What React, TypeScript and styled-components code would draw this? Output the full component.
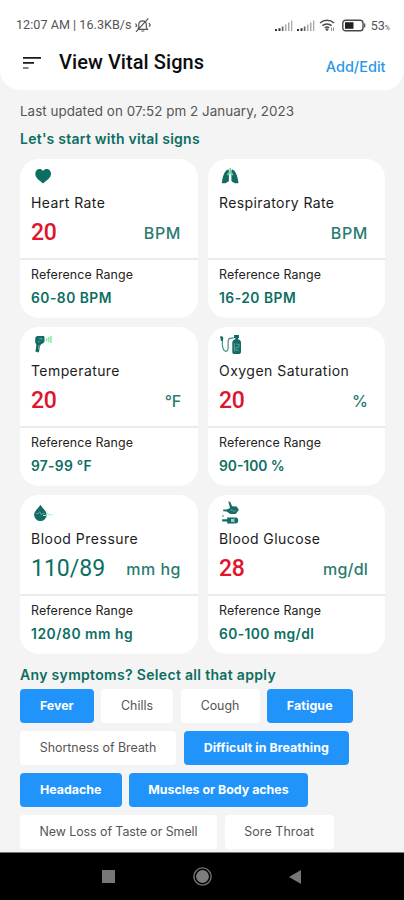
import React from "react";
import styled, { createGlobalStyle } from "styled-components";

const TEAL = "#0c6e62";
const RED = "#e0142d";
const BLUE = "#2094fa";

const GlobalStyle = createGlobalStyle`
  * { box-sizing: border-box; }
  html, body { margin: 0; padding: 0; background: #f4f4f4; }
  body { font-family: Inter, "Liberation Sans", sans-serif; }
  svg { display: block; flex: none; }
`;

const Screen = styled.div`
  width: 404px;
  height: 900px;
  overflow: hidden;
  display: flex;
  flex-direction: column;
  background: #f4f4f4;
`;

const Header = styled.header`
  height: 90px;
  flex: none;
  background: #fff;
  border-radius: 0 0 20px 20px;
`;

const StatusBar = styled.div`
  height: 42px;
  padding: 8px 14px 0 16px;
  display: flex;
  align-items: center;
  font: 400 12.6px/16px Roboto, sans-serif;
  color: #555;
`;

const StatusText = styled.span`
  letter-spacing: 0.03px;
  margin-right: 2px;
  white-space: nowrap;
`;

const StatusIcons = styled.div`
  margin-left: auto;
  display: flex;
  align-items: center;
`;

const Percent = styled.span`
  display: flex;
  align-items: baseline;
  margin: 1px 0 0 5px;
  line-height: 16px;
`;

const PercentSign = styled.span`
  font-size: 7px;
  line-height: 8px;
`;

const TitleBar = styled.div`
  height: 42px;
  padding: 0 18.5px 0 23px;
  display: flex;
  align-items: center;
`;

const Title = styled.h1`
  margin: 0 0 2px 18px;
  font: 500 20px/26px Roboto, sans-serif;
  letter-spacing: 0.07px;
  color: #0c0c0c;
`;

const EditLink = styled.a`
  margin: 8px 0 0 auto;
  font-size: 14.5px;
  line-height: 18px;
  font-weight: 500;
  color: #2b96e8;
`;

const Content = styled.main`
  flex: 1;
  min-height: 0;
  overflow: hidden;
  padding: 12px 19px 0 20px;
`;

const Updated = styled.p`
  margin: 0;
  font-size: 13.4px;
  line-height: 18px;
  color: #555;
  white-space: nowrap;
  letter-spacing: 0.05px;
`;

const SectionTitle = styled.h2<{ $top: number; $ls: number }>`
  margin: ${(p) => p.$top}px 0 0;
  font-size: 14px;
  line-height: 18px;
  font-weight: 600;
  color: ${TEAL};
  letter-spacing: ${(p) => p.$ls}px;
  white-space: nowrap;
`;

const Grid = styled.section`
  margin-top: 10.5px;
  display: grid;
  grid-template-columns: 178px 177px;
  column-gap: 10px;
  row-gap: 8.7px;
`;

const Card = styled.article`
  height: 159.5px;
  border-radius: 19px;
  background: #fff;
`;

const CardTop = styled.div`
  height: 101.5px;
  padding: 6.5px 17px 0 11px;
  border-bottom: 2px solid #ebebeb;
`;

const IconSlot = styled.div`
  height: 24px;
`;

const Name = styled.div<{ $ls: number }>`
  margin-top: 5px;
  font-size: 14px;
  line-height: 18px;
  color: #1c1c1c;
  letter-spacing: ${(p) => p.$ls}px;
  white-space: nowrap;
`;

const Reading = styled.div`
  margin-top: 7px;
  height: 28px;
  display: flex;
  align-items: center;
  justify-content: space-between;
`;

const Value = styled.span<{ $normal?: boolean }>`
  font: ${(p) => (p.$normal ? 400 : 500)} 23px/28px Roboto, sans-serif;
  letter-spacing: ${(p) => (p.$normal ? 0 : -0.2)}px;
  color: ${(p) => (p.$normal ? TEAL : RED)};
`;

const Unit = styled.span<{ $ls: number }>`
  margin: 0 0 1px auto;
  font-size: 16px;
  line-height: 20px;
  font-weight: 500;
  letter-spacing: ${(p) => p.$ls}px;
  color: #2a7b70;
`;

const CardBottom = styled.div`
  padding: 6.5px 11px 0;
`;

const RangeLabel = styled.div`
  font-size: 12.4px;
  line-height: 16px;
  letter-spacing: 0.12px;
  color: #222;
`;

const Range = styled.div<{ $ls: number }>`
  margin-top: 6px;
  font-size: 13.8px;
  line-height: 18px;
  font-weight: 600;
  letter-spacing: ${(p) => p.$ls}px;
  color: ${TEAL};
`;

const Chips = styled.section`
  margin-top: 5px;
  display: flex;
  flex-direction: column;
  gap: 8px;
`;

const ChipRow = styled.div`
  display: flex;
  gap: 7.5px;
`;

const Chip = styled.button<{ $on?: boolean; $w: number; $ls: number }>`
  width: ${(p) => p.$w}px;
  height: 34px;
  flex: none;
  padding: 0;
  border: 0;
  border-radius: 4px;
  background: ${(p) => (p.$on ? BLUE : "#fff")};
  color: ${(p) => (p.$on ? "#fff" : "#555")};
  font: ${(p) => (p.$on ? 700 : 400)} 12.4px/16px Inter, sans-serif;
  letter-spacing: ${(p) => p.$ls}px;
  white-space: nowrap;
`;

const NavBar = styled.nav`
  height: 48px;
  flex: none;
  background: #000;
  border-top: 1px solid #777;
  display: flex;
  align-items: center;
  justify-content: space-between;
  padding: 0 102px;
`;

const MutedBell = () => (
  <svg width="18" height="16" viewBox="0 0 18 16" fill="none" stroke="#555" strokeWidth="1.2">
    <path d="M4 12.3h9.5l-1.2-2V7a3.8 3.8 0 0 0-7.5 0v3.2zM7.3 14h3M2 14.8 14.3 1.3M1.5 6.5 3 9M15 6l1.5 2.5M1.5 10l1.5-1M15 9.5l1-1" />
  </svg>
);

const Signal = () => (
  <svg width="22.5" height="13" viewBox="-2 0 22.5 13">
    <path d="M1 10h2v2H1zM4.5 9.2h2V12h-2z" fill="#333" />
    <path d="M7.8 7.5h1.7V12H7.8z" fill="#666" />
    <path d="M11 5.5h1.5V12H11zM14 3.5h1.5V12H14zM17 1.5h1.3V12H17z" fill="#aaa" />
  </svg>
);

const Wifi = () => (
  <svg width="25" height="14" viewBox="-4 0 25 14" fill="none" stroke="#4b4b4b" strokeWidth="1.5">
    <path d="M-1 5a10.5 10.5 0 0 1 14 0M1.4 7.6a7 7 0 0 1 9.2 0M3.8 9.9a3.6 3.6 0 0 1 4.4 0" />
    <path d="M4.8 11 6 12.7 7.2 11z" strokeWidth="1" fill="#4b4b4b" />
    <path d="M10.5 9.5v3.5M12.5 9.5v3.5" strokeWidth="0.9" stroke="#888" />
  </svg>
);

const Battery = () => (
  <svg width="24" height="13" viewBox="0 0 24 13">
    <rect x="0.8" y="1.2" width="20.2" height="10.6" rx="2.8" fill="#fff" stroke="#484848" strokeWidth="1.4" />
    <path d="M3 3.2h8.5v6.6H3z" fill="#222" />
    <path d="M22 4.5h1.3v4H22z" fill="#555" />
  </svg>
);

const MenuIcon = () => (
  <svg width="18" height="14" viewBox="0 0 18 14">
    <path d="M0 1h18v1.7H0zM0 6h11v1.7H0z" fill="#191919" />
    <path d="M0 11.2h5.5v1.6H0z" fill="#666" />
  </svg>
);

const Heart = () => (
  <svg width="26" height="24" viewBox="0 0 26 24">
    <path d="M12 18.4C7.2 14.7 4.3 12.4 4.3 8.8c0-4.7 5.2-6.4 7.7-2.7 2.7-3.7 8-2 8 2.7 0 3.5-3.2 6-8 9.6z" fill={TEAL} />
  </svg>
);

const Lungs = () => (
  <svg width="26" height="24" viewBox="0 0 26 24">
    <path d="M8.8 4.4C5.5 5.4 3.4 12 2.8 18.1c2.9.7 6.2-.5 7.1-2.4V6c0-1-.4-1.7-1.1-1.6zM13.5 4.4c3.3 1 5.4 7.6 6 13.7-2.9.7-6.2-.5-7.1-2.4V6c0-1 .4-1.7 1.1-1.6z" fill="#126b65" />
    <path d="M11.2 3v5.2M11.2 7.5 8.3 9.8M11.2 7.5l2.8 2.3" stroke="#63dd91" strokeWidth="1.7" fill="none" />
  </svg>
);

const Thermometer = () => (
  <svg width="26" height="24" viewBox="0 0 26 24">
    <path d="M4.3 4.4 6 3h7l.5 1.3v4.5l-1.6 1.6-1.6.6-1.3 2-1.2 6.4-3.4-.9L5.4 12 4.1 8.9z" fill="#126b65" />
    <path d="m8.3 5.7 3.4.2M7 8l1.5 1M8.2 12l-.8 4" stroke="#76aaa4" fill="none" />
    <path d="M15.6 5.3v3M17.7 4v5.3M20 2.8V10" stroke="#86eda0" strokeWidth="1.6" fill="none" />
  </svg>
);

const OxygenTank = () => (
  <svg width="26" height="24" viewBox="0 0 26 24">
    <path d="M1.5 4.2 3.4 5v3.4M3.4 7.5c-.3 4 0 10.8 3.7 10.8 3.5 0 1.3-8.4 2.3-11.5.6-2 2.7-2 5.4-2" fill="none" stroke="#498f86" strokeWidth="1.2" />
    <path d="M1.2 3.3h2l1 2-.8 3-1.5-.6z" fill={TEAL} />
    <path d="M15 2h5v3h-1v1.3c2.2.6 3 1.6 3 3.6V19c0 1.6-1.2 2-2.2 2h-4.4c-1.3 0-2.1-.6-2.1-2V9.8c0-2 1-3 3-3.5V5H15z" fill="#126b65" />
    <path d="M15.4 10.2v8.3M17 11.2h3v3h-3v3h3" stroke="#74aca6" strokeWidth="0.8" fill="none" />
  </svg>
);

const BloodDrop = () => (
  <svg width="26" height="24" viewBox="0 0 26 24">
    <path d="M9.5 3.8c1.5 3.2 6.2 6.2 6.2 9.9a6.2 6.2 0 0 1-12.6 0c0-3.7 4.7-6.7 6.4-9.9z" fill="#126b65" />
    <path d="M5 12.5h2.5l1.2-1.8 1.8 3.3 1.2-1.5h2" stroke="#68a39c" fill="none" />
    <path d="M12 14.5h3l1.3-2.6 1.2 2h4" stroke="#9cf0b5" fill="none" />
  </svg>
);

const Glucose = () => (
  <svg width="26" height="24" viewBox="0 0 26 24">
    <path d="m9.3.2 2 .8 1.8 4.2 4.6.3 2.2 3.4-3.3 4.1h-5.4l-3.5-2.6-3.5-.2V8.4h3.5l3.3-1.5z" fill="#166e66" />
    <path d="m11 8.3 3 1.8 3-.2" stroke="#5a9991" fill="none" />
    <path d="M4 13.4c-1.4 1.5-1 2.5 0 2.5s1.3-1 0-2.5z" fill="#6aafa6" />
    <path d="M3.2 18.2h5v-1.7h8.8c1.6 0 2.2 1.4 2.2 3.1s-.7 2.8-2.2 2.8H8.2v-2h-5z" fill="#126b65" />
    <path d="M12 17.9h3.3V21H12z" fill="#a2cbc6" />
    <path d="M15.5 17v5" stroke="#4b958d" />
  </svg>
);

const SquareIcon = () => (
  <svg width="13" height="14" viewBox="0 0 13 14"><path d="M0 0h13v13H0z" fill="#777" /></svg>
);
const CircleIcon = () => (
  <svg width="20" height="20" viewBox="0 0 20 20">
    <circle cx="10.5" cy="9.5" r="8.6" fill="none" stroke="#777" strokeWidth="1.4" />
    <circle cx="10.5" cy="9.5" r="6.4" fill="#7d7d7d" />
  </svg>
);
const BackIcon = () => (
  <svg width="13" height="14" viewBox="0 0 13 14"><path d="M12 0v14L0 7z" fill="#777" /></svg>
);

interface Vital {
  icon: React.ReactNode;
  name: string;
  nameLs: number;
  value?: string;
  normal?: boolean;
  unit: string;
  unitLs: number;
  range: string;
  rangeLs: number;
}

const vitals: Vital[] = [
  { icon: <Heart />, name: "Heart Rate", nameLs: 0.43, value: "20", unit: "BPM", unitLs: 0.6, range: "60-80 BPM", rangeLs: 0.5 },
  { icon: <Lungs />, name: "Respiratory Rate", nameLs: 0.4, unit: "BPM", unitLs: 0.6, range: "16-20 BPM", rangeLs: 0.5 },
  { icon: <Thermometer />, name: "Temperature", nameLs: 0.42, value: "20", unit: "°F", unitLs: -0.3, range: "97-99 °F", rangeLs: 0.3 },
  { icon: <OxygenTank />, name: "Oxygen Saturation", nameLs: 0.47, value: "20", unit: "%", unitLs: 0, range: "90-100 %", rangeLs: 0 },
  { icon: <BloodDrop />, name: "Blood Pressure", nameLs: 0.5, value: "110/89", normal: true, unit: "mm hg", unitLs: 0.5, range: "120/80 mm hg", rangeLs: 0.56 },
  { icon: <Glucose />, name: "Blood Glucose", nameLs: 0.42, value: "28", unit: "mg/dl", unitLs: 0.2, range: "60-100 mg/dl", rangeLs: 0.4 },
];

interface Symptom {
  label: string;
  w: number;
  on?: boolean;
  ls?: number;
}

const symptoms: Symptom[][] = [
  [
    { label: "Fever", w: 73.5, on: true },
    { label: "Chills", w: 72 },
    { label: "Cough", w: 79 },
    { label: "Fatigue", w: 85.5, on: true, ls: 0.1 },
  ],
  [
    { label: "Shortness of Breath", w: 156 },
    { label: "Difficult in Breathing", w: 165.5, on: true, ls: 0.05 },
  ],
  [
    { label: "Headache", w: 101.5, on: true },
    { label: "Muscles or Body aches", w: 179, on: true },
  ],
  [
    { label: "New Loss of Taste or Smell", w: 197, ls: -0.05 },
    { label: "Sore Throat", w: 109.5, ls: 0.1 },
  ],
];

export default function App() {
  return (
    <Screen>
      <GlobalStyle />
      <Header>
        <StatusBar>
          <StatusText>12:07 AM | 16.3KB/s</StatusText>
          <MutedBell />
          <StatusIcons>
            <Signal />
            <Signal />
            <Wifi />
            <Battery />
            <Percent>53<PercentSign>%</PercentSign></Percent>
          </StatusIcons>
        </StatusBar>
        <TitleBar>
          <MenuIcon />
          <Title>View Vital Signs</Title>
          <EditLink>Add/Edit</EditLink>
        </TitleBar>
      </Header>
      <Content>
        <Updated>Last updated on 07:52 pm 2 January, 2023</Updated>
        <SectionTitle $top={10} $ls={0.25}>Let's start with vital signs</SectionTitle>
        <Grid>
          {vitals.map((v) => (
            <Card key={v.name}>
              <CardTop>
                <IconSlot>{v.icon}</IconSlot>
                <Name $ls={v.nameLs}>{v.name}</Name>
                <Reading>
                  {v.value && <Value $normal={v.normal}>{v.value}</Value>}
                  <Unit $ls={v.unitLs}>{v.unit}</Unit>
                </Reading>
              </CardTop>
              <CardBottom>
                <RangeLabel>Reference Range</RangeLabel>
                <Range $ls={v.rangeLs}>{v.range}</Range>
              </CardBottom>
            </Card>
          ))}
        </Grid>
        <SectionTitle $top={12} $ls={0.32}>Any symptoms? Select all that apply</SectionTitle>
        <Chips>
          {symptoms.map((row, i) => (
            <ChipRow key={i}>
              {row.map((s) => (
                <Chip key={s.label} $on={s.on} $w={s.w} $ls={s.ls ?? 0}>{s.label}</Chip>
              ))}
            </ChipRow>
          ))}
        </Chips>
      </Content>
      <NavBar>
        <SquareIcon />
        <CircleIcon />
        <BackIcon />
      </NavBar>
    </Screen>
  );
}
